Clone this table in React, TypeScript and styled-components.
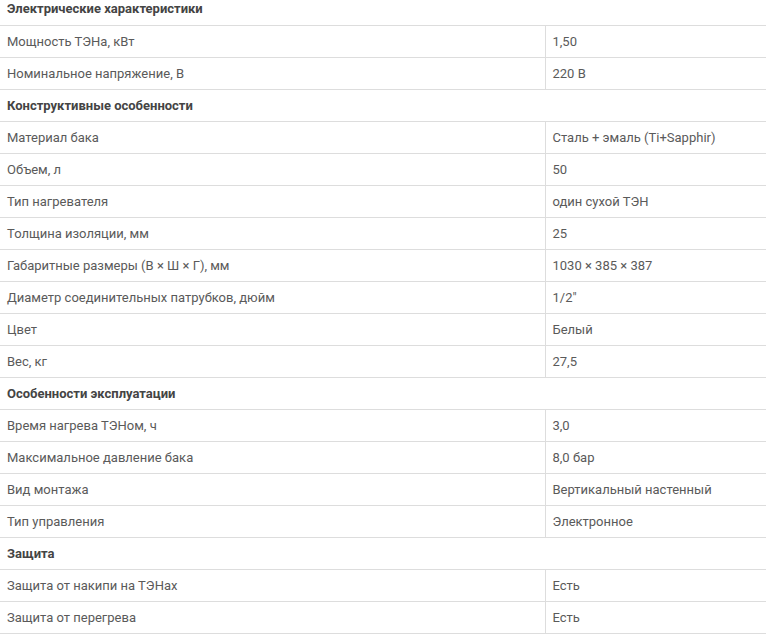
import React from "react";
import styled, { createGlobalStyle } from "styled-components";

type Row = { label: string; value: string };
type Section = { title: string; rows: Row[] };

const sections: Section[] = [
    {
        title: "Электрические характеристики",
        rows: [
            { label: "Мощность ТЭНа, кВт", value: "1,50" },
            { label: "Номинальное напряжение, В", value: "220 В" },
        ],
    },
    {
        title: "Конструктивные особенности",
        rows: [
            { label: "Материал бака", value: "Сталь + эмаль (Ti+Sapphir)" },
            { label: "Объем, л", value: "50" },
            { label: "Тип нагревателя", value: "один сухой ТЭН" },
            { label: "Толщина изоляции, мм", value: "25" },
            { label: "Габаритные размеры (В × Ш × Г), мм", value: "1030 × 385 × 387" },
            { label: "Диаметр соединительных патрубков, дюйм", value: "1/2\"" },
            { label: "Цвет", value: "Белый" },
            { label: "Вес, кг", value: "27,5" },
        ],
    },
    {
        title: "Особенности эксплуатации",
        rows: [
            { label: "Время нагрева ТЭНом, ч", value: "3,0" },
            { label: "Максимальное давление бака", value: "8,0 бар" },
            { label: "Вид монтажа", value: "Вертикальный настенный" },
            { label: "Тип управления", value: "Электронное" },
        ],
    },
    {
        title: "Защита",
        rows: [
            { label: "Защита от накипи на ТЭНах", value: "Есть" },
            { label: "Защита от перегрева", value: "Есть" },
        ],
    },
];

const GlobalStyle = createGlobalStyle`
    html, body {
        margin: 0;
        padding: 0;
        background: #ffffff;
        overflow: hidden;
    }
`;

export default function App() {
    return (
        <>
            <GlobalStyle />
            <SpecTable>
                <colgroup>
                    <LabelCol />
                    <col />
                </colgroup>
                <tbody>
                    {sections.map((section) => (
                        <React.Fragment key={section.title}>
                            <tr>
                                <SectionCell colSpan={2}>{section.title}</SectionCell>
                            </tr>
                            {section.rows.map((row) => (
                                <tr key={row.label}>
                                    <LabelCell>{row.label}</LabelCell>
                                    <Cell>{row.value}</Cell>
                                </tr>
                            ))}
                        </React.Fragment>
                    ))}
                </tbody>
            </SpecTable>
        </>
    );
}

const SpecTable = styled.table`
    width: 766px;
    margin-top: -7px;
    border-collapse: collapse;
    table-layout: fixed;
    font-family: Roboto, "Liberation Sans", sans-serif;
    font-size: 13px;
    color: #5a5a5a;

    tr {
        height: 32px;
        border-bottom: 1px solid #dddddd;
    }
`;

const LabelCol = styled.col`
    width: 545px;
`;

const Cell = styled.td`
    height: 31px;
    padding: 0 7px;
    vertical-align: middle;
    white-space: nowrap;
    box-sizing: border-box;
`;

const SectionCell = styled(Cell)`
    font-weight: 700;
    color: #444444;
`;

const LabelCell = styled(Cell)`
    border-right: 1px solid #dddddd;
`;
